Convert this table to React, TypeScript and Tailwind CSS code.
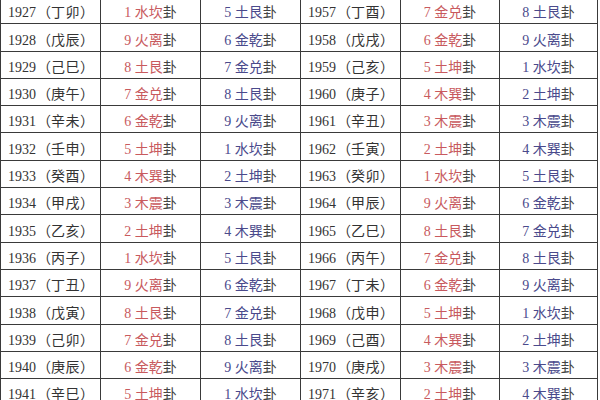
const left = [
  ["1927", "丁卯", "1 水坎", "5 土艮"],
  ["1928", "戊辰", "9 火离", "6 金乾"],
  ["1929", "己巳", "8 土艮", "7 金兑"],
  ["1930", "庚午", "7 金兑", "8 土艮"],
  ["1931", "辛未", "6 金乾", "9 火离"],
  ["1932", "壬申", "5 土坤", "1 水坎"],
  ["1933", "癸酉", "4 木巽", "2 土坤"],
  ["1934", "甲戌", "3 木震", "3 木震"],
  ["1935", "乙亥", "2 土坤", "4 木巽"],
  ["1936", "丙子", "1 水坎", "5 土艮"],
  ["1937", "丁丑", "9 火离", "6 金乾"],
  ["1938", "戊寅", "8 土艮", "7 金兑"],
  ["1939", "己卯", "7 金兑", "8 土艮"],
  ["1940", "庚辰", "6 金乾", "9 火离"],
  ["1941", "辛巳", "5 土坤", "1 水坎"],
];

const right = [
  ["1957", "丁酉", "7 金兑", "8 土艮"],
  ["1958", "戊戌", "6 金乾", "9 火离"],
  ["1959", "己亥", "5 土坤", "1 水坎"],
  ["1960", "庚子", "4 木巽", "2 土坤"],
  ["1961", "辛丑", "3 木震", "3 木震"],
  ["1962", "壬寅", "2 土坤", "4 木巽"],
  ["1963", "癸卯", "1 水坎", "5 土艮"],
  ["1964", "甲辰", "9 火离", "6 金乾"],
  ["1965", "乙巳", "8 土艮", "7 金兑"],
  ["1966", "丙午", "7 金兑", "8 土艮"],
  ["1967", "丁未", "6 金乾", "9 火离"],
  ["1968", "戊申", "5 土坤", "1 水坎"],
  ["1969", "己酉", "4 木巽", "2 土坤"],
  ["1970", "庚戌", "3 木震", "3 木震"],
  ["1971", "辛亥", "2 土坤", "4 木巽"],
];

const cell = "flex items-end pb-[3px] leading-[14px] border-r border-[#3a3a3a]";

const Gua = ({ text, color }: { text: string; color: string }) => (
  <span className={color}>
    {text}
    <span className="text-[#444]">卦</span>
  </span>
);

const Year = ({ y, gz }: { y: string; gz: string }) => (
  <div className={`${cell} pl-[7px]`}>
    {y}
    <span className="inline-block w-[15px] text-right">（</span>
    <span className="tracking-[0.5px]">{gz}</span>
    <span className="inline-block w-[15px] text-left">）</span>
  </div>
);

export default function App() {
  return (
    <div
      className="w-[600px] h-[400px] overflow-hidden bg-white text-[14px] text-[#333]"
      style={{ fontFamily: '"Liberation Serif", "Noto Sans CJK SC", serif' }}
    >
      <div className="-mt-[4px] w-[598px] border-l border-[#3a3a3a]">
        {left.map((l, i) => {
          const r = right[i];
          return (
            <div
              key={l[0]}
              className="grid grid-cols-[100px_100px_100px_100px_99px_98px] h-[27.3px] border-t border-[#3a3a3a]"
            >
              <Year y={l[0]} gz={l[1]} />
              <div className={`${cell} justify-center`}>
                <Gua text={l[2]} color="text-[#c85a5e]" />
              </div>
              <div className={`${cell} justify-center`}>
                <Gua text={l[3]} color="text-[#4a4a8c]" />
              </div>
              <Year y={r[0]} gz={r[1]} />
              <div className={`${cell} justify-center`}>
                <Gua text={r[2]} color="text-[#c85a5e]" />
              </div>
              <div className={`${cell} justify-center`}>
                <Gua text={r[3]} color="text-[#4a4a8c]" />
              </div>
            </div>
          );
        })}
      </div>
    </div>
  );
}
